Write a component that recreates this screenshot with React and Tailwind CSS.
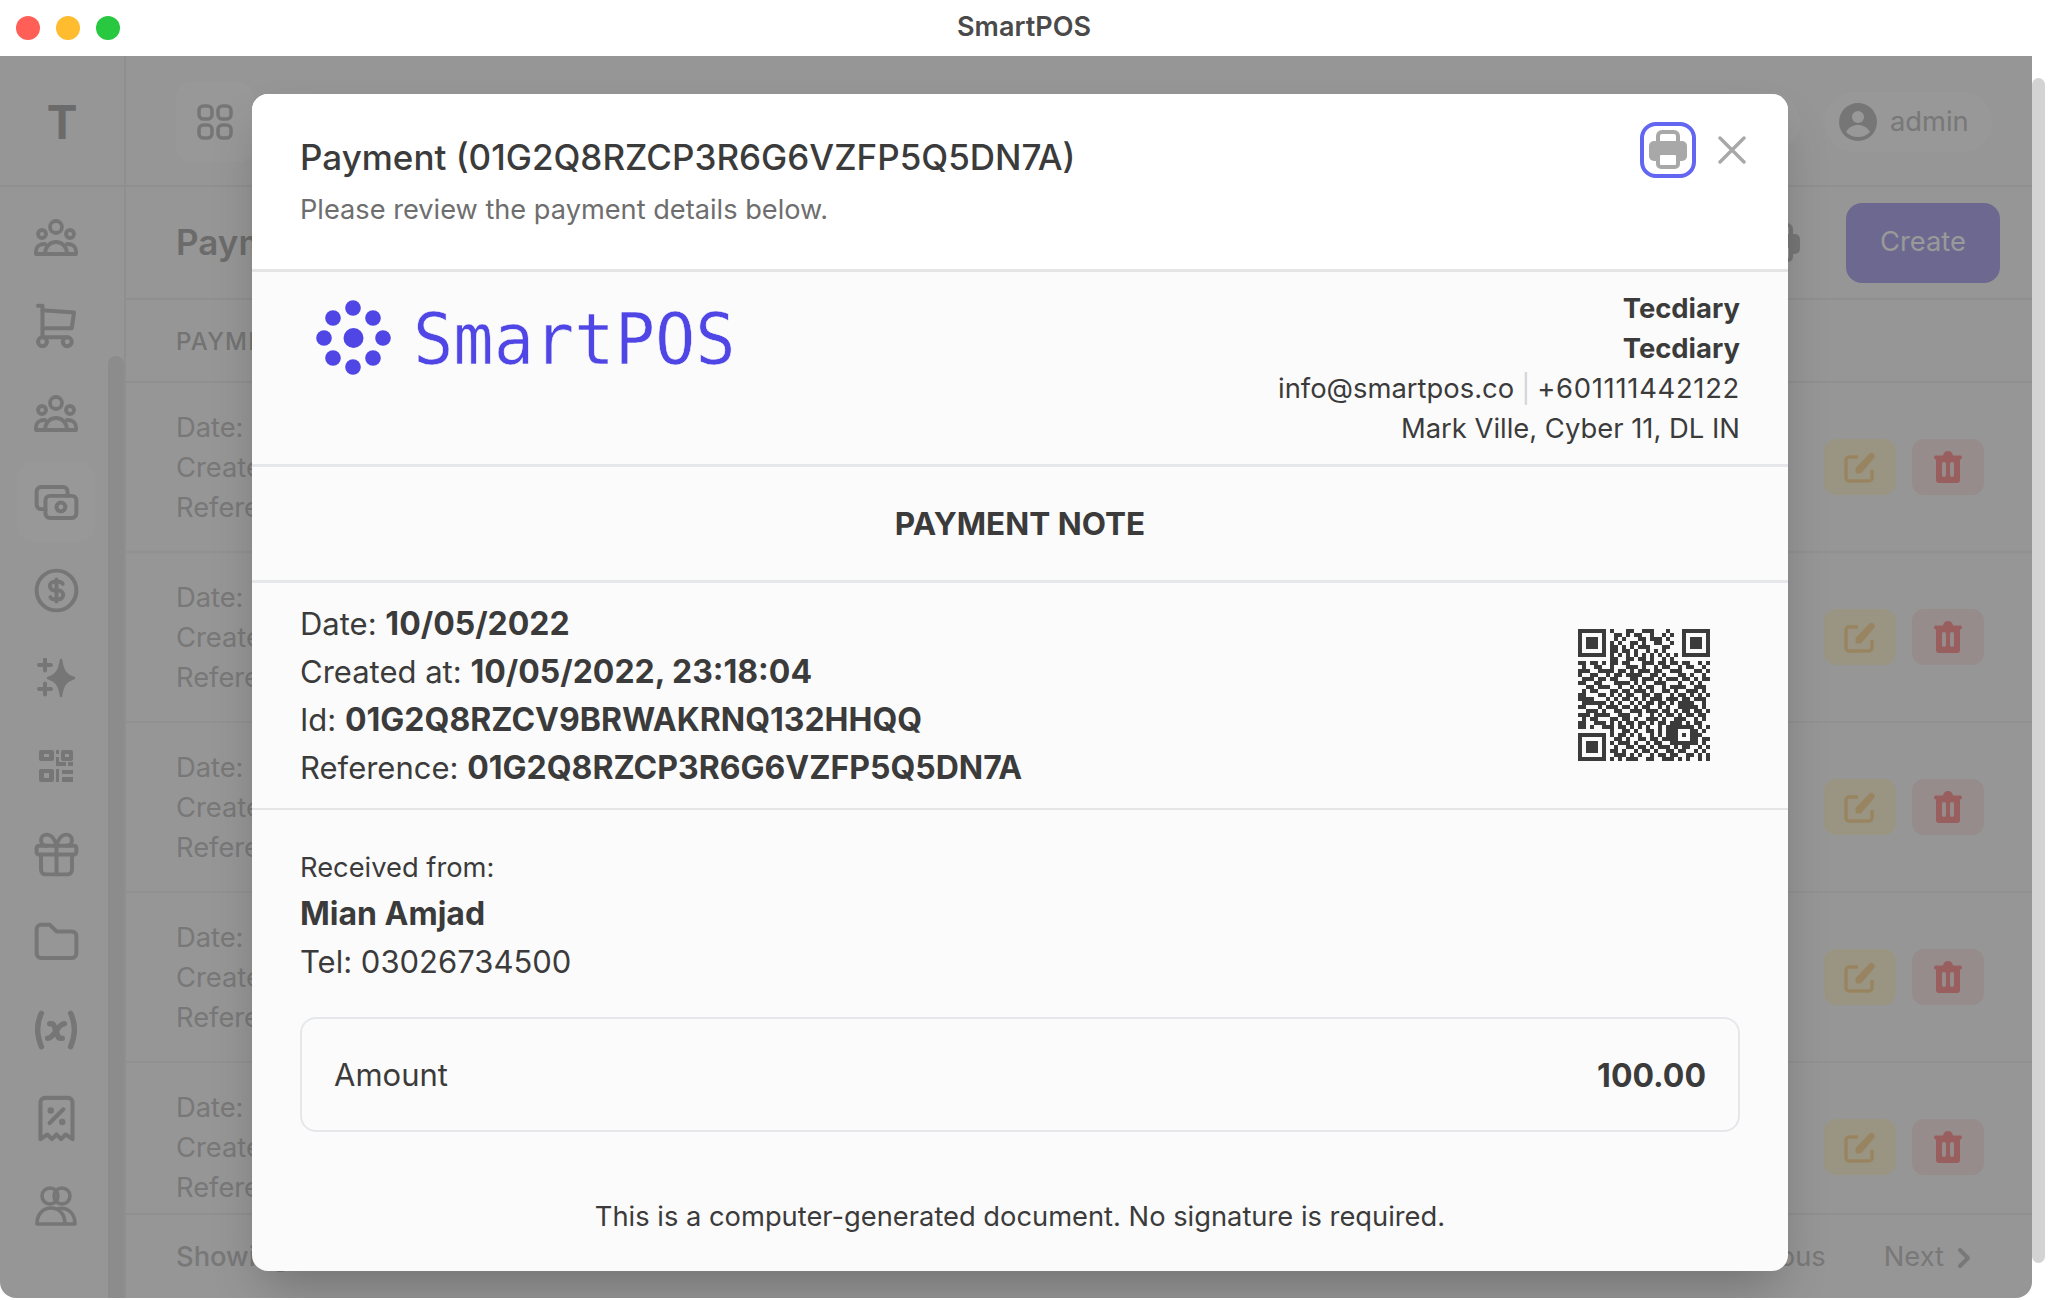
import React from "react";
import { TbShoppingCart, TbCash, TbCoin, TbGift, TbFolder, TbVariable, TbReceiptTax, TbChevronRight } from "react-icons/tb";

const QR = [
  "111111101000110011100010001111111",
  "100000100110101100100101001000001",
  "101110100101000110111010001011101",
  "101110101010011010011001001011101",
  "101110101101010111000110001011101",
  "100000101101101001010100001000001",
  "111111101010101010101010101111111",
  "000000001100110110100101000000000",
  "110110101101100011101101101100101",
  "010011001000111010010110010110010",
  "111001111011010111011001110001101",
  "100110010110111100110100011010010",
  "011101101100011011101011101101011",
  "110011000111101010011100010010100",
  "001101110010010101100101111001110",
  "010110001101101110100110100111010",
  "110001101010110011011001011010101",
  "111100010101101010111011101101110",
  "011111101010010101101101011110010",
  "110001011101101011001010011111010",
  "001110100110011101110110101101101",
  "111011110011100100101011010110110",
  "010110001101101001110100111001010",
  "110011101010110110101101110101100",
  "110100111011010101001011111110101",
  "000000001001101001101011100011010",
  "111111101011010100101011101011100",
  "100000100110100110110111100011011",
  "101110101011101001011001111111010",
  "101110100100110110101110101100101",
  "101110101101001011010011011001010",
  "100000100111010100101101100110101",
  "111111101010111001100111010100101",
];

function QrCode() {
  return (
    <svg width="132" height="132" viewBox="0 0 33 33" shapeRendering="crispEdges" className="shrink-0">
      {QR.map((row, y) =>
        row.split("").map((c, x) => (c === "1" ? <rect key={x + "-" + y} x={x} y={y} width="1" height="1" fill="#3b3b3b" /> : null))
      )}
    </svg>
  );
}

function LogoDots() {
  const dots = [
    [37, 8], [57, 18], [67, 38], [57, 58], [37, 67], [17, 58], [8, 38], [17, 18],
  ];
  return (
    <svg width="76" height="76" viewBox="0 0 76 76" className="shrink-0">
      {dots.map(([x, y]) => (
        <circle key={x + "-" + y} cx={x} cy={y} r="7.8" fill="#4f46e5" />
      ))}
      <circle cx="37.5" cy="38" r="10" fill="#4f46e5" />
    </svg>
  );
}

function PrintIcon({ color, cut }) {
  return (
    <svg width="40" height="40" viewBox="0 0 40 40">
      <rect x="10" y="2" width="20" height="14" rx="4" fill="none" stroke={color} strokeWidth="4" />
      <path d="M6 11h28a5 5 0 0 1 5 5v10a5 5 0 0 1-5 5H6a5 5 0 0 1-5-5V16a5 5 0 0 1 5-5z" fill={color} />
      <rect x="10" y="23" width="20" height="14" rx="3" fill={cut} stroke={color} strokeWidth="4" />
    </svg>
  );
}

function UsersGroupIcon() {
  return (
    <svg width="44" height="38" viewBox="0 0 44 38" fill="none" stroke="#c5c5c5" strokeWidth="3.8" strokeLinecap="round" strokeLinejoin="round">
      <circle cx="22" cy="8" r="6" />
      <circle cx="8" cy="15" r="4" />
      <circle cx="36" cy="15" r="4" />
      <path d="M2 35h40M11 35c0-7 4.500-12 11-12s11 5 11 12M2 35v-3c0-4 3-7 9-7M42 35v-3c0-4-3-7-9-7" />
    </svg>
  );
}

function SparkIcon() {
  return (
    <svg width="40" height="40" viewBox="0 0 40 40" fill="#c5c5c5" stroke="#c5c5c5" strokeLinecap="round">
      <path d="M25 2c1.500 10 4 15 13 18-9 3-11.500 8-13 18-1.500-10-4-15-13-18 9-3 11.500-8 13-18z" strokeWidth="2.500" strokeLinejoin="round" />
      <path d="M3 7h12M9 1.500v11M3 31h12M9 25.500v11" strokeWidth="4" fill="none" />
    </svg>
  );
}

function QrIcon() {
  return (
    <svg width="34" height="34" viewBox="0 0 34 34">
      <path fillRule="evenodd" d="M2 1h11a2 2 0 0 1 2 2v7a2 2 0 0 1-2 2H2a2 2 0 0 1-2-2V3a2 2 0 0 1 2-2zm3 4v3h5V5z" fill="#c5c5c5" />
      <path fillRule="evenodd" d="M24 1h8a2 2 0 0 1 2 2v7a2 2 0 0 1-2 2h-8a2 2 0 0 1-2-2V3a2 2 0 0 1 2-2zm2 4v3h4V5z" fill="#c5c5c5" />
      <path fillRule="evenodd" d="M2 20h11a2 2 0 0 1 2 2v9a2 2 0 0 1-2 2H2a2 2 0 0 1-2-2v-9a2 2 0 0 1 2-2zm3 4v5h5v-5z" fill="#c5c5c5" />
      <path d="M17 1h3v4h-3zM17 8h3v5h7v4H17zM29 13h5v4h-5zM17 20h3v13h-3zM23 21h11v4H23zM23 28h11v5H23z" fill="#c5c5c5" />
    </svg>
  );
}

function UsersIcon() {
  return (
    <svg width="42" height="40" viewBox="0 0 42 40" fill="none" stroke="#c5c5c5" strokeWidth="3.6" strokeLinejoin="round">
      <circle cx="15" cy="10" r="8" />
      <circle cx="27" cy="10" r="8" />
      <path d="M2 38c0-10 6-16 14-16s14 6 14 16zM22 23c10-3 18 4 18 15H30" />
    </svg>
  );
}

function GridIcon() {
  return (
    <svg width="36" height="36" viewBox="0 0 36 36" fill="none" stroke="#c5c5c5" strokeWidth="3.600">
      <rect x="2" y="2" width="13" height="13" rx="4.500" />
      <rect x="21" y="2" width="13" height="13" rx="4.500" />
      <rect x="2" y="21" width="13" height="13" rx="4.500" />
      <rect x="21" y="21" width="13" height="13" rx="4.500" />
    </svg>
  );
}

function EditIcon() {
  return (
    <svg width="32" height="32" viewBox="0 0 32 32" fill="none" stroke="#ffdda3" strokeWidth="3.500" strokeLinejoin="round">
      <path d="M14 6H5a3 3 0 0 0-3 3v18a3 3 0 0 0 3 3h20a3 3 0 0 0 3-3v-8" />
      <path d="M12 22v-5L26 2.500a3 3 0 0 1 4 4L17 22z" fill="#ffdda3" strokeWidth="1" />
    </svg>
  );
}

function TrashIcon() {
  return (
    <svg width="28" height="32" viewBox="0 0 28 32">
      <circle cx="14" cy="5" r="5" fill="#ff9e9e" />
      <rect y="4.500" width="28" height="4" rx="2" fill="#ff9e9e" />
      <path d="M2 7h24v22a3 3 0 0 1-3 3H5a3 3 0 0 1-3-3z" fill="#ff9e9e" />
      <rect x="8" y="11" width="4" height="15" rx="2" fill="#fae9e9" />
      <rect x="16" y="11" width="4" height="15" rx="2" fill="#fae9e9" />
    </svg>
  );
}

const NAV = [
  <UsersGroupIcon />,
  <TbShoppingCart size={54} strokeWidth={1.8} color="#c5c5c5" />,
  <UsersGroupIcon />,
  <TbCash size={53} strokeWidth={1.8} color="#c5c5c5" />,
  <TbCoin size={53} strokeWidth={1.8} color="#c5c5c5" />,
  <SparkIcon />,
  <QrIcon />,
  <TbGift size={53} strokeWidth={1.8} color="#c5c5c5" />,
  <TbFolder size={53} strokeWidth={1.8} color="#c5c5c5" />,
  <TbVariable size={50} strokeWidth={2.6} color="#c5c5c5" />,
  <TbReceiptTax size={55} strokeWidth={1.8} color="#c5c5c5" />,
  <UsersIcon />,
];

function Sidebar() {
  return (
    <aside className="w-[126px] shrink-0 flex flex-col border-r-2 border-[#eeeeee] bg-[#fafafa]">
      <div className="h-[131px] shrink-0 flex items-center justify-center pt-[2px] border-b-2 border-[#eeeeee] text-[46px] leading-none font-bold text-[#b2b2b2]">
        T
      </div>
      <div className="flex-1 min-h-0 flex">
        <nav className="w-[108px] pt-[11px] pl-[17px] flex flex-col gap-[8px]">
          {NAV.map((icon, i) => (
            <div key={i} className={"w-[78px] h-[80px] shrink-0 rounded-2xl flex items-center justify-center " + (i === 3 ? "bg-[#fdfdfd]" : "")}>
              {icon}
            </div>
          ))}
        </nav>
        <div className="w-[16px] flex flex-col pt-[169px]">
          <div className="flex-1 rounded-t-full bg-[#e9e9e9]" />
        </div>
      </div>
    </aside>
  );
}

function PaymentRow() {
  return (
    <div className="h-[170px] shrink-0 flex items-center justify-between pl-[50px] pr-[48px] border-b-2 border-[#f2f2f2]">
      <div className="pt-[2px] text-[27.3px] leading-[40px] text-[#c8c8c8]">
        <p>Date: 10/05/2022</p>
        <p>Created at: 10/05/2022, 23:18:04</p>
        <p>Reference: 01G2Q8RZCP3R6G6VZFP5Q5DN7A</p>
      </div>
      <div className="flex gap-4">
        <button className="w-[72px] h-[56px] rounded-xl bg-[#fff9d9] flex items-center justify-center"><EditIcon /></button>
        <button className="w-[72px] h-[56px] rounded-xl bg-[#fae9e9] flex items-center justify-center"><TrashIcon /></button>
      </div>
    </div>
  );
}

function Main() {
  return (
    <main className="flex-1 min-w-0 flex flex-col">
      <header className="h-[131px] shrink-0 flex items-center justify-between pl-[50px] pr-[40px] pt-[2px] border-b-2 border-[#eeeeee]">
        <div className="w-[78px] h-[80px] rounded-2xl bg-[#fefefe] flex items-center justify-center"><GridIcon /></div>
        <div className="flex items-center gap-[25px]">
          <div className="w-[64px] h-[60px] rounded-full bg-[#fdfdfd]" />
          <div className="h-[60px] w-[167px] rounded-full bg-[#fdfdfd] flex items-center gap-[13px] pl-[14px]">
            <svg width="38" height="38" viewBox="0 0 38 38">
              <circle cx="19" cy="19" r="19" fill="#c5c5c5" />
              <circle cx="19" cy="14" r="6" fill="#fdfdfd" />
              <path d="M7 29c3-5 7-7 12-7s9 2 12 7c-3 3-7 5-12 5s-9-2-12-5z" fill="#fdfdfd" />
            </svg>
            <span className="text-[27.3px] leading-none text-[#c8c8c8]">admin</span>
          </div>
        </div>
      </header>
      <div className="h-[113px] shrink-0 flex items-center justify-between pl-[50px] pr-[32px] border-b-2 border-[#eeeeee]">
        <h1 className="text-[35px] font-semibold text-[#b2b2b2]">Payments</h1>
        <div className="flex items-center gap-[45px]">
          <PrintIcon color="#c5c5c5" cut="#fdfdfd" />
          <button className="w-[154px] h-[80px] rounded-2xl bg-[#b4adf0] text-[27.3px] text-white">Create</button>
        </div>
      </div>
      <div className="h-[83px] shrink-0 flex items-center pl-[50px] pt-[2px] border-b-2 border-[#eeeeee] text-[24px] font-medium tracking-wider text-[#c0c0c0]">
        PAYMENT
      </div>
      <div className="flex-1 min-h-0 overflow-hidden flex flex-col">
        {[0, 1, 2, 3, 4].map((i) => (
          <PaymentRow key={i} />
        ))}
      </div>
      <footer className="h-[85px] shrink-0 flex items-center justify-between pl-[50px] pr-[52px] pt-[2px] border-t-2 border-[#eeeeee] text-[27.3px] text-[#c8c8c8]">
        <span className="font-medium">Showing 1 to 5 of 5 results</span>
        <div className="flex items-center gap-[58px]">
          <span>Previous</span>
          <span className="flex items-center gap-[4px]">
            Next <TbChevronRight size={32} strokeWidth={3} />
          </span>
        </div>
      </footer>
    </main>
  );
}

function Modal() {
  return (
    <div className="ml-[252px] mt-[38px] w-[1536px] h-[1177px] rounded-2xl bg-[#fbfbfb] shadow-2xl overflow-hidden flex flex-col text-[#3b3b3b]">
      <div className="h-[178px] shrink-0 bg-white border-b-[3px] border-[#e5e5e5] flex justify-between pl-12 pr-[42px] pt-[28px]">
        <div>
          <h2 className="text-[35px] leading-[70px] font-medium whitespace-nowrap">Payment (01G2Q8RZCP3R6G6VZFP5Q5DN7A)</h2>
          <p className="text-[27.2px] leading-[36px] text-[#6e6e6e]">Please review the payment details below.</p>
        </div>
        <div className="flex items-start gap-[22px]">
          <button className="w-[56px] h-[56px] rounded-2xl border-4 border-[#6366f1] flex items-center justify-center">
            <PrintIcon color="#a8a8a8" cut="#ffffff" />
          </button>
          <svg width="28" height="28" viewBox="0 0 28 28" className="mt-[14px]" stroke="#a8a8a8" strokeWidth="3.400" strokeLinecap="round">
            <path d="M2 2l24 24M26 2L2 26" />
          </svg>
        </div>
      </div>

      <div className="h-[195px] shrink-0 border-b-[3px] border-[#e5e7eb] flex justify-between pl-[64px] pr-12">
        <div className="flex items-start gap-[21px] pt-[28px]">
          <LogoDots />
          <span className="inline-block mt-[2px] scale-y-[1.05] font-['DejaVu_Sans_Mono',monospace] text-[67px] leading-[76px] text-[#4f46e5] [-webkit-text-stroke:0.6px_#fbfbfb]">SmartPOS</span>
        </div>
        <div className="pt-[16px] text-right text-[27.4px] leading-[40px]">
          <p className="font-bold">Tecdiary</p>
          <p className="font-bold">Tecdiary</p>
          <p>info@smartpos.co<span className="mx-[7px] text-[#d5d5d5]">|</span><span className="tracking-[0.7px]">+601111442122</span></p>
          <p>Mark Ville, Cyber 11, DL IN</p>
        </div>
      </div>

      <div className="h-[116px] shrink-0 border-b-[3px] border-[#e5e7eb] flex items-center justify-center text-[31.5px] font-bold">
        PAYMENT NOTE
      </div>

      <div className="h-[227px] shrink-0 border-b-2 border-[#e5e5e5] flex justify-between pl-12 pr-[78px] pt-[17px] text-[31px] leading-[48px]">
        <div>
          <p>Date: <b className="text-[32px] font-bold">10/05/2022</b></p>
          <p>Created at: <b className="text-[32px] font-bold">10/05/2022, 23:18:04</b></p>
          <p>Id: <b className="text-[32px] font-bold">01G2Q8RZCV9BRWAKRNQ132HHQQ</b></p>
          <p>Reference: <b className="text-[32px] font-bold">01G2Q8RZCP3R6G6VZFP5Q5DN7A</b></p>
        </div>
        <div className="pt-[29px]"><QrCode /></div>
      </div>

      <div className="flex-1 min-h-0 px-12 pt-[38px]">
        <p className="text-[27.3px] leading-[40px]">Received from:</p>
        <p className="text-[32px] leading-[48px] mt-[2px] font-bold">Mian Amjad</p>
        <p className="text-[31px] leading-[48px]">Tel: 03026734500</p>
        <div className="mt-[31px] h-[115px] rounded-2xl border-2 border-[#e5e7eb] flex items-center justify-between px-[32px] pt-[2px] text-[31px]">
          <span>Amount</span>
          <span className="text-[32px] font-bold">100.00</span>
        </div>
        <p className="mt-[65px] text-center text-[27.3px] leading-[40px]">This is a computer-generated document. No signature is required.</p>
      </div>
    </div>
  );
}

export default function App() {
  return (
    <div className="w-[2048px] h-[1300px] bg-white flex flex-col overflow-hidden font-['Inter',sans-serif]">
      <div className="h-[56px] shrink-0 relative flex items-center justify-center">
        <div className="absolute left-[16px] top-[16px] flex gap-[16px]">
          <span className="w-[24px] h-[24px] rounded-full bg-[#ff5f57]" />
          <span className="w-[24px] h-[24px] rounded-full bg-[#febc2e]" />
          <span className="w-[24px] h-[24px] rounded-full bg-[#28c840]" />
        </div>
        <span className="pb-[2px] text-[27px] font-semibold text-[#4a4a4a]">SmartPOS</span>
      </div>
      <div className="flex items-start">
        <div className="relative w-[2032px] h-[1242px] rounded-b-2xl overflow-hidden flex bg-[#fbfbfb]">
          <Sidebar />
          <Main />
          <div className="absolute inset-0 bg-black/40">
            <Modal />
          </div>
        </div>
        <div className="w-[16px] pt-[22px] pr-[3px]">
          <div className="h-[1185px] rounded-full bg-[#d3d3d3]" />
        </div>
      </div>
    </div>
  );
}
